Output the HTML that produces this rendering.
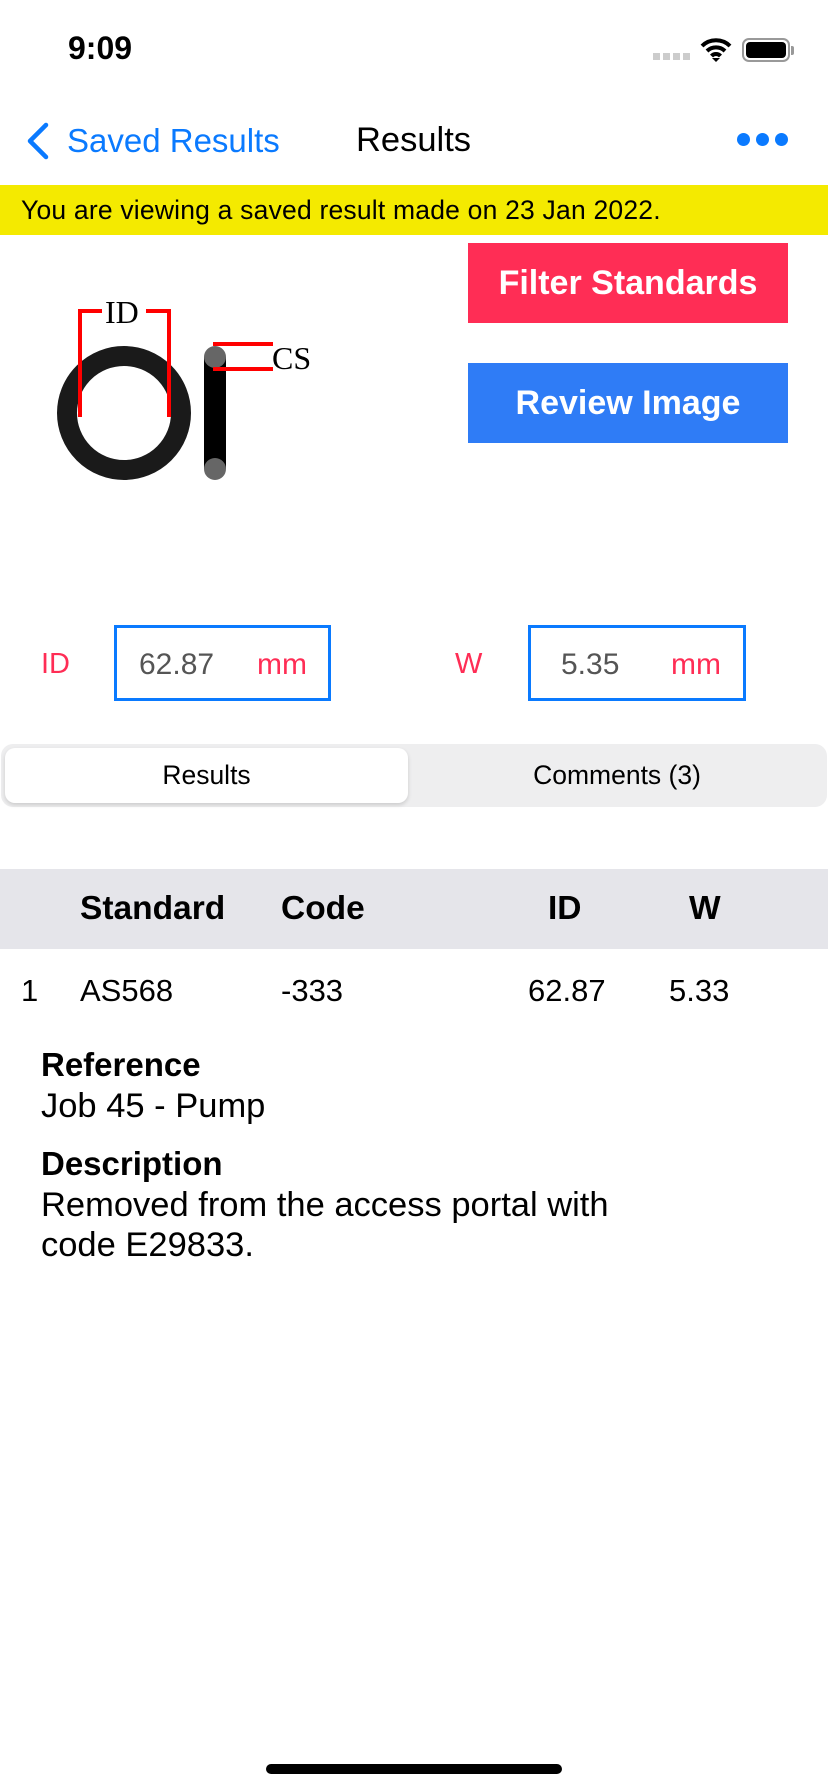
<!DOCTYPE html>
<html><head><meta charset="utf-8"><style>
*{margin:0;padding:0;box-sizing:border-box}
body{width:828px;height:1792px;background:#fff;font-family:"Liberation Sans",sans-serif;position:relative;overflow:hidden;color:#000}
.a{position:absolute;white-space:nowrap}
</style></head><body>
<div class="a" style="left:68px;top:30px;font-size:32px;font-weight:bold">9:09</div>
<div class="a" style="left:653px;top:53px;width:38px;height:7px;background:repeating-linear-gradient(90deg,#ccc 0 7px,transparent 7px 10px)"></div>
<svg class="a" style="left:700px;top:37px" width="32" height="26" viewBox="0 0 32 26"><path d="M2 9a20 20 0 0 1 28 0M7 14a13 13 0 0 1 18 0M11.5 19a6 6 0 0 1 9 0" stroke="#000" stroke-width="4" fill="none"/><path d="M12 21l4 4 4-4z" fill="#000"/></svg>
<div class="a" style="left:742px;top:38px;width:48px;height:24px;border:2px solid #999;border-radius:7px;padding:2px"><div style="width:100%;height:100%;background:#000;border-radius:4px"></div></div>
<div class="a" style="left:791px;top:46px;width:3px;height:9px;background:#999;border-radius:0 2px 2px 0"></div>
<svg class="a" style="left:24px;top:122px" width="28" height="38"><path d="M22 3L6 19l16 16" stroke="#0a7aff" stroke-width="4.5" fill="none" stroke-linecap="round" stroke-linejoin="round"/></svg>
<div class="a" style="left:67px;top:122px;font-size:33px;color:#0a7aff">Saved Results</div>
<div class="a" style="left:356px;top:121px;font-size:34.5px">Results</div>
<div class="a" style="left:737px;top:133px;width:13px;height:13px;border-radius:50%;background:#0a7aff;box-shadow:19px 0 #0a7aff,38px 0 #0a7aff"></div>
<div class="a" style="left:0;top:185px;width:828px;height:50px;background:#f4ea00"></div>
<div class="a" style="left:21px;top:195px;font-size:26.5px;letter-spacing:0.2px">You are viewing a saved result made on 23 Jan 2022.</div>
<svg class="a" style="left:0;top:240px" width="420" height="260" viewBox="0 240 420 260">
<circle cx="124" cy="413" r="57" stroke="#1a1a1a" stroke-width="20" fill="none"/>
<path d="M80 417V311h22M146 311h23v106" stroke="#f00" stroke-width="4" fill="none"/>
<text x="105" y="323" font-family="Liberation Serif" font-size="32">ID</text>
<rect x="204" y="357" width="22" height="112" fill="#000"/>
<circle cx="215" cy="357" r="11" fill="#666"/><circle cx="215" cy="469" r="11" fill="#666"/>
<path d="M213 344h60M213 369h60" stroke="#f00" stroke-width="4"/>
<text x="272" y="369" font-family="Liberation Serif" font-size="32">CS</text>
</svg>
<div class="a" style="left:468px;top:243px;width:320px;height:80px;background:#ff2d55;color:#fff;font-size:34px;font-weight:bold;text-align:center;line-height:80px">Filter Standards</div>
<div class="a" style="left:468px;top:363px;width:320px;height:80px;background:#2f7cf6;color:#fff;font-size:34px;font-weight:bold;text-align:center;line-height:80px">Review Image</div>
<div class="a" style="left:41px;top:648px;font-size:29px;color:#ff2d55">ID</div>
<div class="a" style="left:114px;top:625px;width:217px;height:76px;border:3px solid #0a7aff"></div>
<div class="a" style="left:139px;top:648px;font-size:30px;color:#555">62.87</div>
<div class="a" style="left:257px;top:648px;font-size:30px;color:#ff2d55">mm</div>
<div class="a" style="left:455px;top:648px;font-size:29px;color:#ff2d55">W</div>
<div class="a" style="left:528px;top:625px;width:218px;height:76px;border:3px solid #0a7aff"></div>
<div class="a" style="left:561px;top:648px;font-size:30px;color:#555">5.35</div>
<div class="a" style="left:671px;top:648px;font-size:30px;color:#ff2d55">mm</div>
<div class="a" style="left:1px;top:744px;width:826px;height:63px;background:#eeeeef;border-radius:12px"></div>
<div class="a" style="left:5px;top:748px;width:403px;height:55px;background:#fff;border-radius:10px;box-shadow:0 2px 4px rgba(0,0,0,.15);text-align:center;line-height:55px;font-size:26.5px">Results</div>
<div class="a" style="left:408px;top:748px;width:418px;height:55px;text-align:center;line-height:55px;font-size:26.5px">Comments (3)</div>
<div class="a" style="left:0;top:869px;width:828px;height:80px;background:#e5e5ea"></div>
<div class="a" style="left:80px;top:890px;font-size:33.5px;font-weight:bold">Standard</div>
<div class="a" style="left:281px;top:890px;font-size:33.5px;font-weight:bold">Code</div>
<div class="a" style="left:548px;top:890px;font-size:33.5px;font-weight:bold">ID</div>
<div class="a" style="left:689px;top:890px;font-size:33.5px;font-weight:bold">W</div>
<div class="a" style="left:21px;top:973px;font-size:31px">1</div>
<div class="a" style="left:80px;top:973px;font-size:31px">AS568</div>
<div class="a" style="left:281px;top:973px;font-size:31px">-333</div>
<div class="a" style="left:528px;top:973px;font-size:31px">62.87</div>
<div class="a" style="left:669px;top:973px;font-size:31px">5.33</div>
<div class="a" style="left:41px;top:1046px;font-size:33px;font-weight:bold">Reference</div>
<div class="a" style="left:41px;top:1087px;font-size:34.5px">Job 45 - Pump</div>
<div class="a" style="left:41px;top:1145px;font-size:33px;font-weight:bold">Description</div>
<div class="a" style="left:41px;top:1186px;font-size:34.5px">Removed from the access portal with</div>
<div class="a" style="left:41px;top:1226px;font-size:34.5px">code E29833.</div>
<div class="a" style="left:266px;top:1764px;width:296px;height:10px;background:#000;border-radius:5px"></div>
</body></html>
